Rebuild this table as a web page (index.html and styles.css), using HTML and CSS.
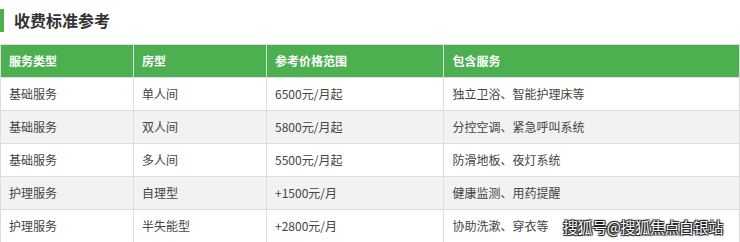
FILE: index.html
```html
<!DOCTYPE html>
<html lang="zh-CN">
<head>
<meta charset="utf-8">
<title>收费标准参考</title>
<link rel="stylesheet" href="styles.css">
</head>
<body>
<div class="page">
  <h2 class="section-title">收费标准参考</h2>
  <table class="fee-table">
    <colgroup>
      <col class="c1"><col class="c2"><col class="c3"><col class="c4">
    </colgroup>
    <thead>
      <tr><th>服务类型</th><th>房型</th><th>参考价格范围</th><th>包含服务</th></tr>
    </thead>
    <tbody>
      <tr><td>基础服务</td><td>单人间</td><td>6500元/月起</td><td>独立卫浴、智能护理床等</td></tr>
      <tr><td>基础服务</td><td>双人间</td><td>5800元/月起</td><td>分控空调、紧急呼叫系统</td></tr>
      <tr><td>基础服务</td><td>多人间</td><td>5500元/月起</td><td>防滑地板、夜灯系统</td></tr>
      <tr><td>护理服务</td><td>自理型</td><td>+1500元/月</td><td>健康监测、用药提醒</td></tr>
      <tr><td>护理服务</td><td>半失能型</td><td>+2800元/月</td><td>协助洗漱、穿衣等</td></tr>
    </tbody>
  </table>
  <div class="watermark">搜狐号@搜狐焦点白银站</div>
</div>
</body>
</html>
```
FILE: styles.css
```css
html, body {
  margin: 0;
  padding: 0;
  background: #fff;
}
body {
  font-family: "Noto Sans CJK SC", "Noto Sans", sans-serif;
  color: #444;
}
.page {
  position: relative;
  width: 740px;
  height: 242px;
  overflow: hidden;
}
.section-title {
  margin: 9px 0 0 0;
  border-left: 4px solid #4caf50;
  padding-left: 10px;
  font-size: 16px;
  line-height: 23px;
  font-weight: bold;
  color: #333;
}
.fee-table {
  margin-top: 12px;
  width: 740px;
  border-collapse: collapse;
  table-layout: fixed;
  font-size: 12px;
}
.c1 { width: 18%; }
.c2 { width: 18%; }
.c3 { width: 24%; }
.c4 { width: 40%; }
.fee-table th,
.fee-table td {
  border: 1px solid #ddd;
  padding: 0 8px;
  height: 32px;
  line-height: 32px;
  text-align: left;
  white-space: nowrap;
}
.fee-table th {
  background: #4caf50;
  color: #fff;
  font-weight: bold;
}
.fee-table tbody tr:nth-child(even) td {
  background: #f2f2f2;
}
.watermark {
  position: absolute;
  left: 563px;
  top: 216px;
  font-size: 15px;
  line-height: 22px;
  color: #fff;
  font-weight: normal;
  text-shadow: 0 0 1px #000, 1px 1px 1px #222, -1px -1px 1px #222, 1px -1px 1px #222, -1px 1px 1px #222;
  letter-spacing: -0.4px;
}
```
